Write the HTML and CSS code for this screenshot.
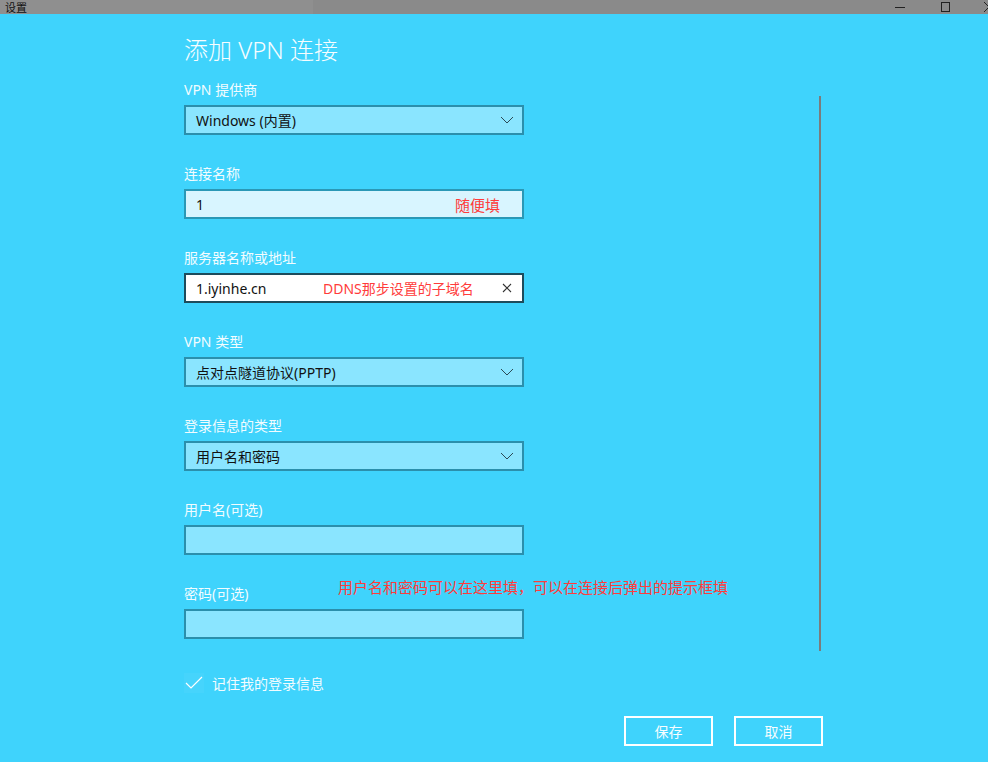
FILE: index.html
```html
<!DOCTYPE html>
<html lang="zh-CN">
<head>
    <meta charset="UTF-8">
    <meta name="viewport" content="width=device-width, initial-scale=1.0">
    <title>设置</title>
    <link rel="stylesheet" href="styles.css">
</head>
<body>
    <div class="titlebar">
        <span class="app-name">设置</span>
        <div class="win-controls">
            <span class="win-min"></span>
            <span class="win-max"></span>
            <svg class="win-close" width="4" height="10" viewBox="0 0 4 10"><path d="M0 0 L10 10 M10 0 L0 10" stroke="#222" stroke-width="1"/></svg>
        </div>
    </div>

    <div class="page">
        <h1>添加 VPN 连接</h1>

        <div class="field">
            <label>VPN 提供商</label>
            <div class="box select">
                <span>Windows (内置)</span>
                <svg class="chev" width="14" height="8" viewBox="0 0 14 8"><polyline points="1,1 7,7 13,1" fill="none" stroke="#2b4a55" stroke-width="1"/></svg>
            </div>
        </div>

        <div class="field">
            <label>连接名称</label>
            <div class="box input filled">
                <span>1</span>
                <span class="note note-name">随便填</span>
            </div>
        </div>

        <div class="field">
            <label>服务器名称或地址</label>
            <div class="box input focused">
                <span>1.iyinhe.cn</span>
                <span class="note note-server">DDNS那步设置的子域名</span>
                <svg class="clear" width="10" height="10" viewBox="0 0 10 10"><path d="M1 1 L9 9 M9 1 L1 9" stroke="#333" stroke-width="1.1"/></svg>
            </div>
        </div>

        <div class="field">
            <label>VPN 类型</label>
            <div class="box select">
                <span>点对点隧道协议(PPTP)</span>
                <svg class="chev" width="14" height="8" viewBox="0 0 14 8"><polyline points="1,1 7,7 13,1" fill="none" stroke="#2b4a55" stroke-width="1"/></svg>
            </div>
        </div>

        <div class="field">
            <label>登录信息的类型</label>
            <div class="box select">
                <span>用户名和密码</span>
                <svg class="chev" width="14" height="8" viewBox="0 0 14 8"><polyline points="1,1 7,7 13,1" fill="none" stroke="#2b4a55" stroke-width="1"/></svg>
            </div>
        </div>

        <div class="field">
            <label>用户名(可选)</label>
            <div class="box input"></div>
        </div>

        <div class="field">
            <label>密码(可选)</label>
            <div class="box input"></div>
            <span class="note note-login">用户名和密码可以在这里填，可以在连接后弹出的提示框填</span>
        </div>

        <div class="remember">
            <span class="check">
                <svg width="18" height="14" viewBox="0 0 18 14"><polyline points="1,7 6,12 17,1" fill="none" stroke="#fff" stroke-width="1.2"/></svg>
            </span>
            <span>记住我的登录信息</span>
        </div>

        <div class="actions">
            <button>保存</button>
            <button>取消</button>
        </div>
    </div>

    <div class="scrollbar"></div>
</body>
</html>
```

FILE: styles.css
```css
body {
    margin: 0;
    height: 762px;
    overflow: hidden;
    background-color: #3fd3fc;
    font-family: "Noto Sans", "Noto Sans CJK SC", sans-serif;
    font-size: 14px;
    position: relative;
}
.titlebar {
    height: 14px;
    display: flex;
    justify-content: space-between;
    align-items: center;
    background: linear-gradient(to right, #8f8f8f 0, #8f8f8f 313px, #8a8a8a 313px);
    color: #111;
    font-size: 11px;
}
.app-name {
    padding-left: 5px;
    padding-top: 1px;
    line-height: 13px;
    font-family: "Noto Sans CJK SC", sans-serif;
}
.win-controls {
    display: flex;
    align-items: center;
    height: 14px;
}
.win-min {
    width: 10px;
    height: 1px;
    background: #222;
    margin-right: 36px;
}
.win-max {
    width: 7px;
    height: 8px;
    border: 1px solid #222;
    margin-right: 34px;
}
.win-close {
    display: block;
}
.page {
    padding-left: 184px;
    padding-top: 20px;
}
h1 {
    margin: 0 0 14px;
    height: 32px;
    line-height: 32px;
    font-size: 24px;
    font-weight: 300;
    color: #f7fdff;
}
.field {
    position: relative;
    margin-bottom: 29px;
}
.field label {
    display: block;
    height: 20px;
    line-height: 20px;
    margin-bottom: 5px;
    color: #f2fcff;
}
.box {
    box-sizing: border-box;
    width: 340px;
    height: 30px;
    border: 2px solid #2b8fac;
    background-color: #8ae5ff;
    display: flex;
    align-items: center;
    padding: 0 10px;
    color: #111;
    position: relative;
}
.select {
    justify-content: space-between;
}
.chev {
    margin-right: -2px;
}
.filled {
    background-color: #d8f5ff;
    border-color: #2a98b6;
}
.focused {
    background-color: #fff;
    border-color: #1d4c5c;
}
.clear {
    position: absolute;
    right: 10px;
    top: 8px;
}
.note {
    position: absolute;
    color: #ff3b3b;
    font-size: 15px;
    white-space: nowrap;
}
.note-name {
    left: 269px;
    top: 3px;
}
.note-server {
    left: 137px;
    top: 3px;
    font-size: 14px;
}
.note-login {
    left: 154px;
    top: -8px;
}
.remember {
    display: flex;
    align-items: center;
    gap: 8px;
    margin-top: 34px;
    height: 20px;
    color: #f2fcff;
}
.check {
    width: 20px;
    height: 20px;
    display: flex;
    align-items: center;
    justify-content: center;
    background: rgba(255, 255, 255, 0.04);
}
.actions {
    display: flex;
    gap: 21px;
    margin-top: 23px;
    margin-left: 440px;
}
.actions button {
    box-sizing: border-box;
    width: 89px;
    height: 30px;
    background: transparent;
    border: 2px solid #fff;
    color: #f7fdff;
    font-family: "Noto Sans CJK SC", sans-serif;
    font-size: 14px;
    padding: 0;
}
.scrollbar {
    position: absolute;
    left: 819px;
    top: 96px;
    width: 2px;
    height: 555px;
    background-color: #7b7b7b;
}
```
